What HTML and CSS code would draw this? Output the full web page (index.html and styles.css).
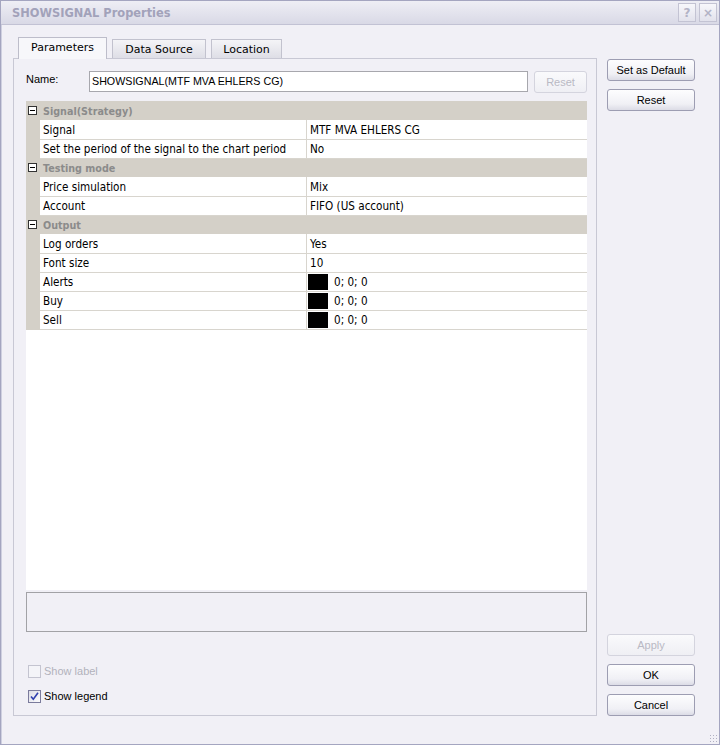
FILE: index.html
```html
<!DOCTYPE html>
<html lang="en">
<head>
<meta charset="UTF-8">
<title>SHOWSIGNAL Properties</title>
<link rel="stylesheet" href="styles.css">
</head>
<body>
  <div class="window">
    <div class="titlebar">
      <span class="title">SHOWSIGNAL Properties</span>
      <div class="title-btns">
        <span class="tbtn">?</span>
        <span class="tbtn">&#215;</span>
      </div>
    </div>

    <div class="content">
      <div class="main">
        <div class="tabs">
          <div class="tab tab-active tab-params">Parameters</div>
          <div class="tab tab-source">Data Source</div>
          <div class="tab tab-location">Location</div>
        </div>

        <div class="panel">
          <div class="name-row">
            <label class="name-label" for="name">Name:</label>
            <div class="name-input" id="name">SHOWSIGNAL(MTF MVA EHLERS CG)</div>
            <button class="btn btn-small" disabled>Reset</button>
          </div>

          <div class="grid">
            <div class="cat"><span class="minus"></span><span class="cat-name">Signal(Strategy)</span></div>
            <div class="prop"><span class="gutter"></span><span class="pname">Signal</span><span class="pval">MTF MVA EHLERS CG</span></div>
            <div class="prop"><span class="gutter"></span><span class="pname">Set the period of the signal to the chart period</span><span class="pval">No</span></div>

            <div class="cat"><span class="minus"></span><span class="cat-name">Testing mode</span></div>
            <div class="prop"><span class="gutter"></span><span class="pname">Price simulation</span><span class="pval">Mix</span></div>
            <div class="prop"><span class="gutter"></span><span class="pname">Account</span><span class="pval">FIFO (US account)</span></div>

            <div class="cat"><span class="minus"></span><span class="cat-name">Output</span></div>
            <div class="prop"><span class="gutter"></span><span class="pname">Log orders</span><span class="pval">Yes</span></div>
            <div class="prop"><span class="gutter"></span><span class="pname">Font size</span><span class="pval">10</span></div>
            <div class="prop"><span class="gutter"></span><span class="pname">Alerts</span><span class="pval"><span class="swatch"></span>0; 0; 0</span></div>
            <div class="prop"><span class="gutter"></span><span class="pname">Buy</span><span class="pval"><span class="swatch"></span>0; 0; 0</span></div>
            <div class="prop"><span class="gutter"></span><span class="pname">Sell</span><span class="pval"><span class="swatch"></span>0; 0; 0</span></div>
          </div>

          <div class="desc"></div>

          <div class="checks">
            <div class="check check-disabled"><span class="box"></span>Show label</div>
            <div class="check">
              <span class="box">
                <svg width="11" height="11" viewBox="0 0 11 11"><path d="M2 5.5 L4.3 8.3 L9 1.8" fill="none" stroke="#2f3fae" stroke-width="1.6"/></svg>
              </span>Show legend
            </div>
          </div>
        </div>
      </div>

      <div class="side">
        <button class="btn">Set as Default</button>
        <button class="btn">Reset</button>
        <div class="spacer"></div>
        <button class="btn" disabled>Apply</button>
        <button class="btn">OK</button>
        <button class="btn">Cancel</button>
      </div>
    </div>
    <div class="grip"></div>
  </div>
</body>
</html>
```

FILE: styles.css
```css
* {
  margin: 0;
  padding: 0;
  box-sizing: border-box;
}

body {
  width: 720px;
  height: 745px;
  background-color: #f1f0f6;
  font-family: "Liberation Sans", Arial, sans-serif;
  font-size: 11px;
  color: #000;
  overflow: hidden;
}

.window {
  position: relative;
  width: 720px;
  height: 745px;
  border: 1px solid #a4a5c0;
  box-shadow: inset 1px 1px 0 #cfd0e0;
  background-color: #f1f0f6;
  display: flex;
  flex-direction: column;
}

.titlebar {
  height: 24px;
  background: linear-gradient(#eeeef5, #d9d9e6);
  border-bottom: 1px solid #c2c2d4;
  display: flex;
  align-items: center;
  padding: 0 2px 0 11px;
}

.title {
  flex: 1;
  font-family: "DejaVu Sans", sans-serif;
  font-weight: bold;
  font-size: 11.4px;
  color: #a2a2ba;
}

.title-btns {
  display: flex;
  gap: 3px;
}

.tbtn {
  width: 18px;
  height: 19px;
  border: 1px solid #c3c3d3;
  background: linear-gradient(#f7f7fb, #e2e2ec);
  color: #b3b3c6;
  font-family: "DejaVu Sans", sans-serif;
  font-weight: bold;
  font-size: 12px;
  display: flex;
  align-items: center;
  justify-content: center;
}

.content {
  flex: 1;
  display: flex;
  gap: 10px;
  padding: 12px 0 28px 12px;
}

.main {
  width: 584px;
  display: flex;
  flex-direction: column;
}

/* tabs */
.tabs {
  height: 21px;
  display: flex;
  align-items: flex-end;
  padding-left: 5px;
  position: relative;
  z-index: 1;
}

.tab {
  height: 19px;
  border: 1px solid #c2c2ce;
  border-bottom: none;
  background: linear-gradient(#f4f4f7, #dedee6);
  font-family: "DejaVu Sans", sans-serif;
  font-size: 11px;
  display: flex;
  align-items: center;
  justify-content: center;
}

.tab-active {
  height: 22px;
  margin-bottom: -1px;
  background: #f7f7fa;
  border-color: #bdbdca;
  padding-bottom: 2px;
}

.tab-params { width: 89px; }
.tab-source { width: 94px; margin-left: 5px; }
.tab-location { width: 71px; margin-left: 5px; }

.panel {
  flex: 1;
  border: 1px solid #c8c8d4;
  padding: 12px 9px 0 12px;
  display: flex;
  flex-direction: column;
}

/* name row */
.name-row {
  display: flex;
  align-items: flex-start;
  height: 21px;
}

.name-label {
  width: 63px;
  line-height: 16px;
}

.name-input {
  width: 439px;
  height: 21px;
  border: 1px solid #a7a7ad;
  background-color: #fff;
  padding-left: 2px;
  line-height: 19px;
  font-size: 10.7px;
}

.btn-small {
  width: 53px;
  height: 20px;
  margin-left: 6px;
}

/* property grid */
.grid {
  margin-top: 9px;
  height: 489px;
  background-color: #fff;
  font-family: "DejaVu Sans Condensed", "Liberation Sans", sans-serif;
  font-size: 11.6px;
}

.cat {
  height: 19px;
  background-color: #d4d0c8;
  display: flex;
  align-items: center;
}

.minus {
  width: 9px;
  height: 9px;
  margin-left: 2px;
  border: 1px solid #333;
  background-color: #fff;
  position: relative;
}

.minus::after {
  content: "";
  position: absolute;
  left: 1px;
  top: 3px;
  width: 5px;
  height: 1px;
  background-color: #000;
}

.cat-name {
  margin-left: 6px;
  padding-top: 1px;
  font-weight: bold;
  font-size: 10.7px;
  color: #8b8b8b;
}

.prop {
  height: 19px;
  display: grid;
  grid-template-columns: 14px 266px 1fr;
}

.gutter {
  background-color: #d4d0c8;
}

.pname,
.pval {
  border-bottom: 1px solid #d8d5ce;
  padding: 1px 0 0 3px;
  line-height: 18px;
  white-space: nowrap;
}

.pval {
  border-left: 1px solid #d8d5ce;
  display: flex;
  align-items: center;
  padding-left: 3px;
}

.swatch {
  width: 20px;
  height: 16px;
  margin: -1px 6px 0 -2px;
  background-color: #000;
}

.desc {
  margin-top: 2px;
  height: 40px;
  border: 1px solid #a2a2a6;
}

/* checkboxes */
.checks {
  margin-top: 33px;
  display: flex;
  flex-direction: column;
  gap: 12px;
  padding-left: 2px;
}

.check {
  height: 13px;
  display: flex;
  align-items: center;
  gap: 3px;
  line-height: 13px;
  font-size: 11px;
}

.box {
  width: 13px;
  height: 13px;
  border: 1px solid #7b7b9c;
  background: linear-gradient(135deg, #dcdce6, #fbfbfd);
  display: flex;
  align-items: center;
  justify-content: center;
}

.check-disabled {
  color: #b2b2bc;
}

.check-disabled .box {
  border-color: #c4c4d0;
  background: #f4f4f8;
}

/* buttons */
.btn {
  font-family: "Liberation Sans", Arial, sans-serif;
  font-size: 11px;
  color: #000;
  height: 22px;
  border: 1px solid #9d9db2;
  border-radius: 3px;
  background: linear-gradient(#fdfdfe, #f0f0f5 70%, #dcdce6);
}

.btn:disabled {
  color: #b9b9c4;
  border-color: #d4d4de;
  background: linear-gradient(#fafafc, #efeff4);
}

.side {
  width: 88px;
  padding-top: 22px;
  display: flex;
  flex-direction: column;
  gap: 8px;
}

.side .spacer {
  flex: 1;
}

.grip {
  position: absolute;
  right: 2px;
  bottom: 2px;
  width: 8px;
  height: 8px;
  background: radial-gradient(circle, #b0b0c2 0.8px, transparent 1px) 0 0 / 3px 3px;
}
```
